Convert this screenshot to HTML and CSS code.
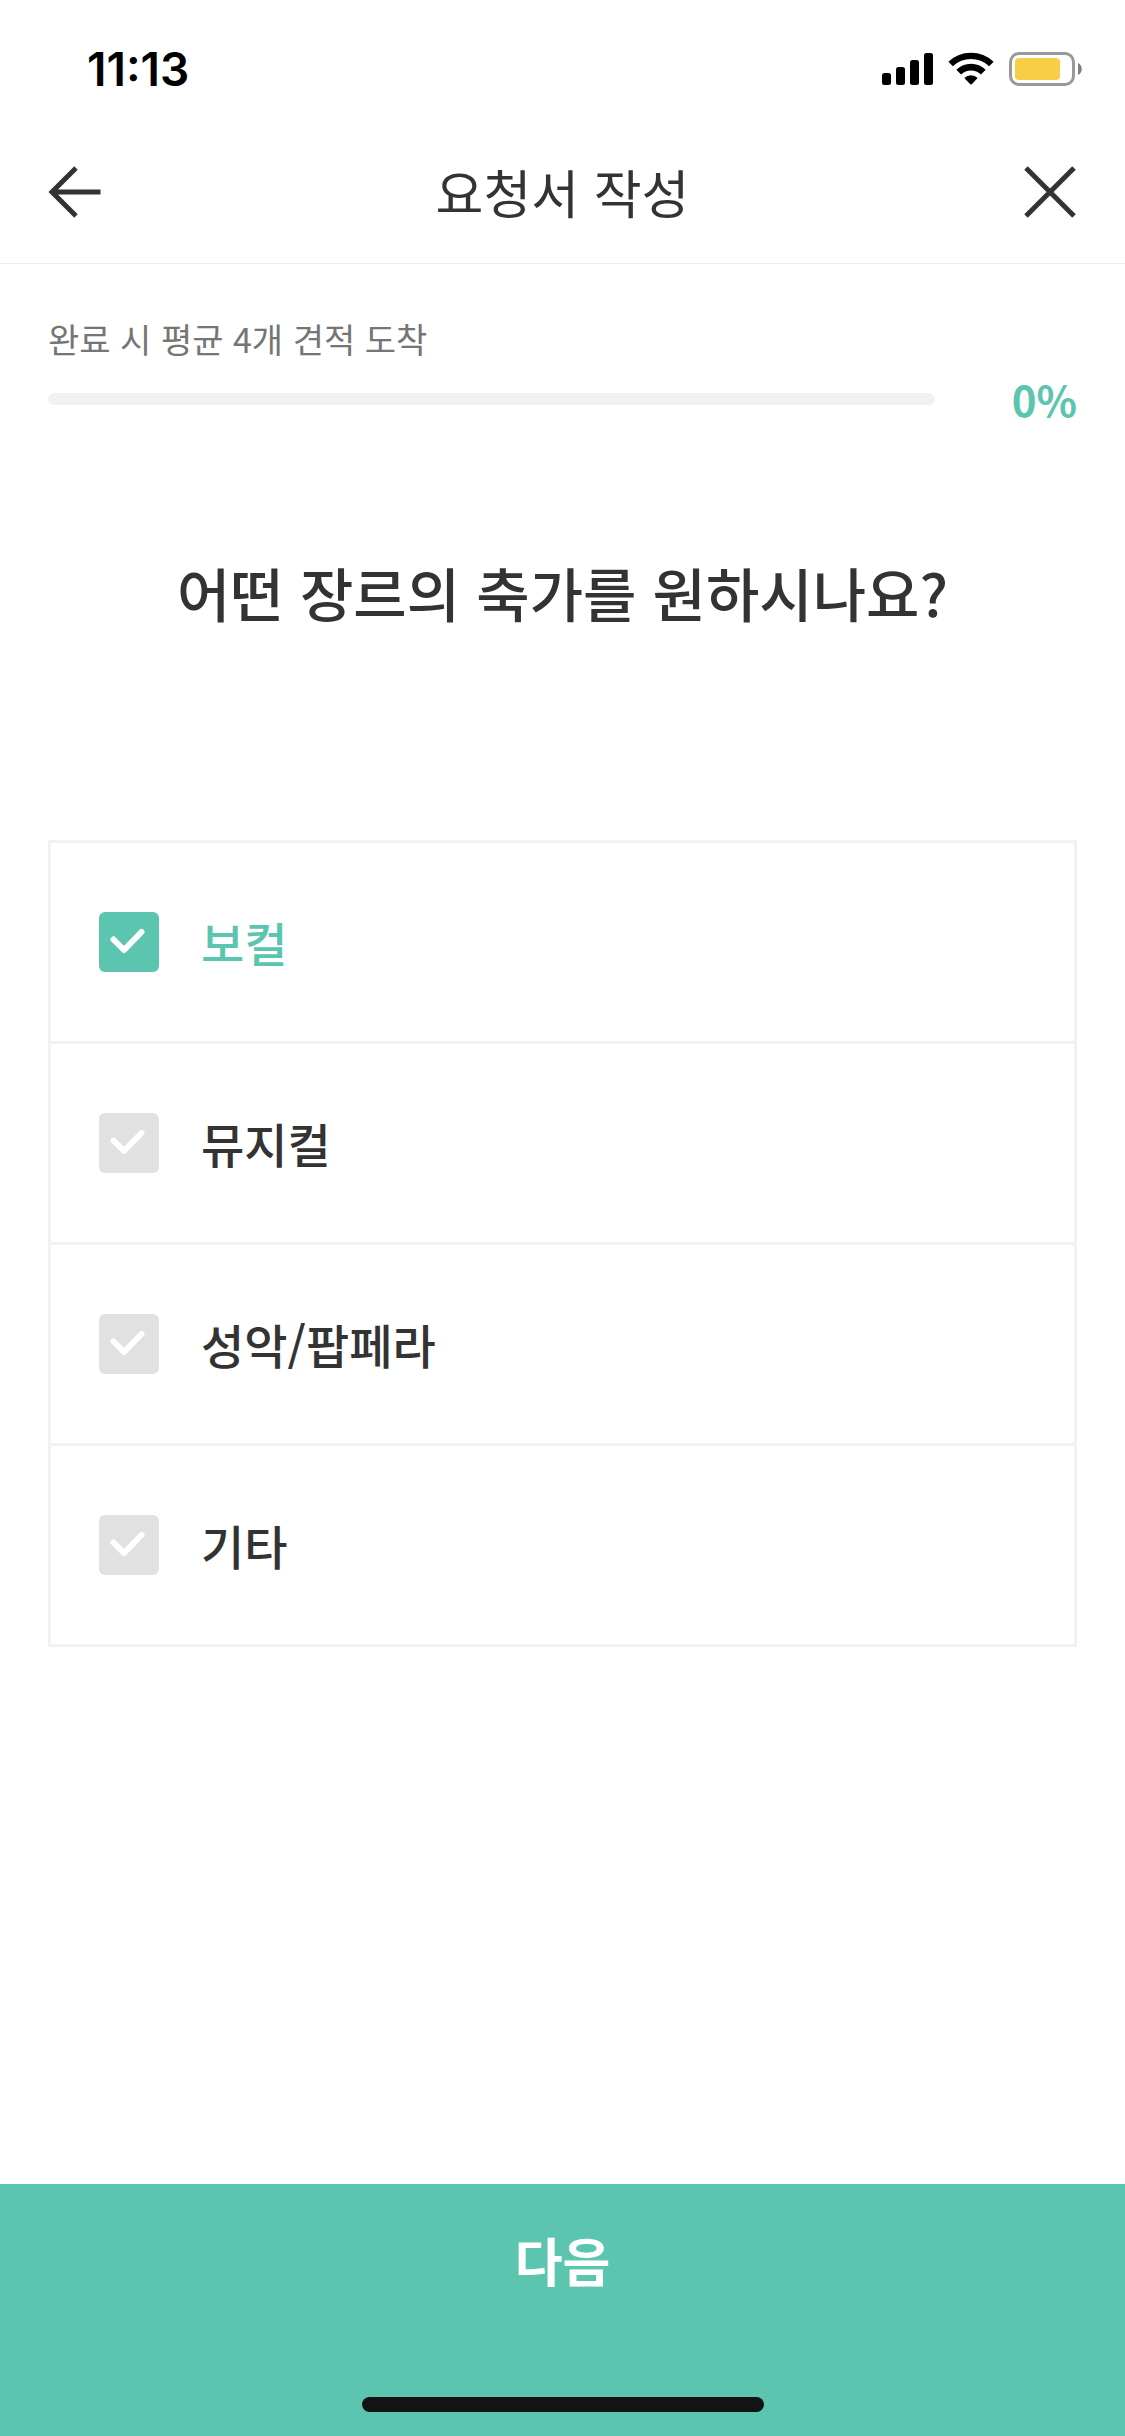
FILE: index.html
```html
<!DOCTYPE html>
<html lang="ko">
<head>
  <meta charset="utf-8">
  <meta name="viewport" content="width=device-width, initial-scale=1">
  <title>요청서 작성</title>
  <link rel="stylesheet" href="styles.css">
</head>
<body>
  <div class="page">
    <div class="status-bar">
      <time class="clock">11:13</time>
      <div class="status-icons">
        <svg width="51" height="34" viewBox="0 0 51 34" aria-hidden="true">
          <rect x="0" y="21" width="9" height="12" rx="2.5"/>
          <rect x="14" y="15" width="9" height="18" rx="2.5"/>
          <rect x="28" y="8" width="9" height="25" rx="2.5"/>
          <rect x="42" y="1" width="9" height="32" rx="2.5"/>
        </svg>
        <svg width="46" height="34" viewBox="0 0 46 34" aria-hidden="true">
          <path d="M0.4 9.8a32.5 32.5 0 0 1 45.2 0l-4.5 4.5a26 26 0 0 0-36.2 0z"/>
          <path d="M8.3 17.8a21 21 0 0 1 29.4 0l-4.8 4.8a14.3 14.3 0 0 0-19.8 0z"/>
          <path d="M16.3 26a9.6 9.6 0 0 1 13.4 0l-6 6.2a1 1 0 0 1-1.4 0z"/>
        </svg>
        <svg width="73" height="34" viewBox="0 0 73 34" aria-hidden="true">
          <rect x="1.5" y="1.5" width="63" height="31" rx="8.5" fill="none" stroke="#999" stroke-width="3"/>
          <rect x="6" y="6" width="45" height="22" rx="4" fill="#f7ce46"/>
          <path d="M69 11c5 2 5 10 0 12z" fill="#808080"/>
        </svg>
      </div>
    </div>

    <header class="header">
      <button class="icon-button" type="button" aria-label="뒤로">
        <svg width="54" height="54" viewBox="0 0 54 54" fill="none" stroke="#333" stroke-width="5">
          <path d="M28 3L4 27l24 24M4 27h48.500"/>
        </svg>
      </button>
      <h1 class="title">요청서 작성</h1>
      <button class="icon-button" type="button" aria-label="닫기">
        <svg width="54" height="54" viewBox="0 0 54 54" fill="none" stroke="#333336" stroke-width="5">
          <path d="M3 3l48 48M51 3L3 51"/>
        </svg>
      </button>
    </header>

    <main class="content">
      <section class="progress">
        <p class="progress-caption" id="progress-caption">완료 시 평균 4개 견적 도착</p>
        <div class="progress-row">
          <div class="progress-track" role="progressbar" aria-labelledby="progress-caption" aria-valuemin="0" aria-valuemax="100" aria-valuenow="0"></div>
          <span class="progress-value">0%</span>
        </div>
      </section>

      <h2 class="question" id="question">어떤 장르의 축가를 원하시나요?</h2>

      <div class="options" role="group" aria-labelledby="question">
        <label class="option">
          <span class="check">
            <input class="check-input" type="checkbox" name="genre" checked>
            <svg class="check-mark" viewBox="0 0 60 60" aria-hidden="true"><path d="M14.5 27.5L25 38l17.500-18"/></svg>
          </span>
          <span class="option-label">보컬</span>
        </label>
        <label class="option">
          <span class="check">
            <input class="check-input" type="checkbox" name="genre">
            <svg class="check-mark" viewBox="0 0 60 60" aria-hidden="true"><path d="M14.5 27.5L25 38l17.500-18"/></svg>
          </span>
          <span class="option-label">뮤지컬</span>
        </label>
        <label class="option">
          <span class="check">
            <input class="check-input" type="checkbox" name="genre">
            <svg class="check-mark" viewBox="0 0 60 60" aria-hidden="true"><path d="M14.5 27.5L25 38l17.500-18"/></svg>
          </span>
          <span class="option-label">성악/팝페라</span>
        </label>
        <label class="option">
          <span class="check">
            <input class="check-input" type="checkbox" name="genre">
            <svg class="check-mark" viewBox="0 0 60 60" aria-hidden="true"><path d="M14.5 27.5L25 38l17.500-18"/></svg>
          </span>
          <span class="option-label">기타</span>
        </label>
      </div>
    </main>

    <footer class="footer">
      <button class="next-button" type="button">다음</button>
      <div class="home-indicator"></div>
    </footer>
  </div>
</body>
</html>
```
FILE: styles.css
```css
:root {
  --teal: #5bc5af;
  --ink: #333;
  --line: #f2f2f2;
}

* {
  box-sizing: border-box;
}

body {
  margin: 0;
  background: #fff;
  color: var(--ink);
  font-family: "Noto Sans CJK KR", "Noto Sans", sans-serif;
}

h1,
h2,
p {
  margin: 0;
}

button {
  padding: 0;
  border: 0;
  background: none;
  font-family: inherit;
  cursor: pointer;
}

svg {
  display: block;
}

.page {
  display: flex;
  flex-direction: column;
  min-height: 100vh;
}

.status-bar {
  display: flex;
  align-items: center;
  justify-content: space-between;
  height: 120px;
  padding: 18px 43px 0 87px;
}

.clock {
  font-family: Inter, "Liberation Sans", sans-serif;
  font-size: 46px;
  font-weight: 600;
  line-height: 54px;
  color: #000;
}

.status-icons {
  display: flex;
  align-items: center;
  gap: 15px;
}

.header {
  display: flex;
  align-items: center;
  justify-content: space-between;
  height: 144px;
  padding: 0 48px;
  border-bottom: 1px solid #eee;
}

.title {
  font-size: 52px;
  font-weight: 400;
  line-height: 80px;
}

.content {
  flex: 1;
  padding: 48px 48px 96px;
}

.progress-caption {
  font-size: 34px;
  line-height: 54px;
  color: #757575;
}

.progress-row {
  display: flex;
  align-items: center;
  gap: 77px;
  height: 66px;
}

.progress-track {
  flex: 1;
  height: 12px;
  border-radius: 6px;
  background: #f1f1f1;
}

.progress-value {
  font-size: 42px;
  font-weight: 700;
  line-height: 64px;
  color: var(--teal);
}

.question {
  margin: 112px 0 200px;
  font-size: 58px;
  font-weight: 500;
  line-height: 96px;
  text-align: center;
}

.options {
  border: 3px solid var(--line);
}

.option {
  display: flex;
  align-items: center;
  gap: 42px;
  padding: 69px 48px;
  cursor: pointer;
}

.option + .option {
  border-top: 3px solid var(--line);
}

.check {
  display: grid;
  width: 60px;
  height: 60px;
}

.check-input,
.check-mark {
  grid-area: 1 / 1;
  width: 60px;
  height: 60px;
}

.check-input {
  appearance: none;
  margin: 0;
  border-radius: 6px;
  background: #e1e1e1;
}

.check-input:checked {
  background: var(--teal);
}

.check-mark {
  fill: none;
  stroke: #fff;
  stroke-width: 6;
  stroke-linecap: round;
  stroke-linejoin: round;
  pointer-events: none;
}

.option-label {
  font-size: 47px;
  font-weight: 500;
  line-height: 60px;
}

.check:has(:checked) + .option-label {
  color: var(--teal);
}

.footer {
  display: flex;
  flex-direction: column;
  align-items: center;
  gap: 61px;
  padding-bottom: 24px;
  background: var(--teal);
}

.next-button {
  width: 100%;
  height: 152px;
  color: #fff;
  font-size: 52px;
  font-weight: 700;
  line-height: 80px;
}

.home-indicator {
  width: 402px;
  height: 15px;
  border-radius: 8px;
  background: #131313;
}
```
